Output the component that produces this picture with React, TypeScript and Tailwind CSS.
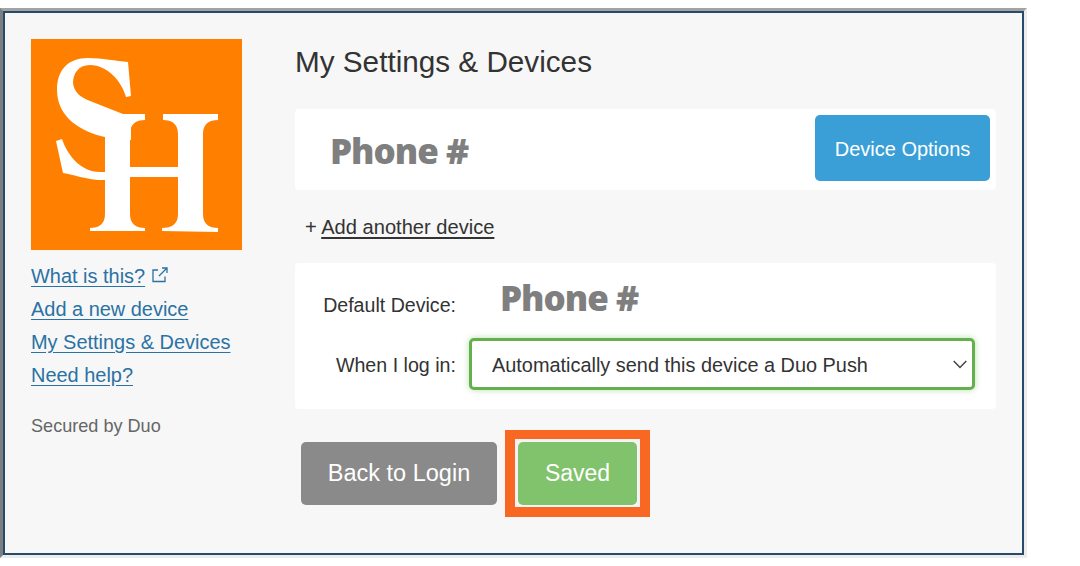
const sans = { fontFamily: '"Liberation Sans", Arial, sans-serif' };

const Logo = () => (
  <svg viewBox="31 39 211 211" className="block w-[211px] h-[211px]">
    <rect x="31" y="39" width="211" height="211" fill="#ff8000" />
    {/* S */}
    <path
      fill="#fff"
      d="M128 62 L131 96 L126 97 C122 82 108 65 90 65 C78 65 73 74 73 83 C74 92 80 97 90 101 L123 114 L131 114 L131 140 L105 137 C82 132 57 118 57 90 C57 70 68 58 88 58 C102 58 116 61 128 62 Z"
    />
    <path
      fill="#fff"
      d="M56 141 L62 139 C67 154 80 172 100 172 L106 172 L106 180 L98 180 C86 179 74 175 63 173 Z"
    />
    {/* H */}
    <path
      fill="#fff"
      d="M90 231 L90 228 C99 228 105 224 105 214 L105 137 L123 114 L145 114 L145 120 C136 120 130 124 130 134 L130 167 L178 167 L178 134 C178 124 172 120 163 120 L163 114 L218 114 L218 120 C209 120 203 124 203 134 L203 214 C203 224 209 228 218 228 L218 232 L162 231 L162 228 C172 228 178 224 178 214 L178 177 L130 177 L130 214 C130 224 136 228 145 228 L145 231 Z"
    />
  </svg>
);

const ExternalIcon = () => (
  <svg width="18" height="18" viewBox="0 0 18 18" fill="none" stroke="#2a72a4" strokeWidth="1.3" className="ml-[6px] mt-[-4px]">
    <path d="M7 4 H2 V15.5 H14 V10.5" />
    <path d="M8 10 L15.5 2.5 M11 2 H16 V7" />
  </svg>
);

const PhoneLabel = ({ className }: { className: string }) => (
  <div
    className={`font-black text-[#7f7f7f] text-[35px] leading-none tracking-[-1px] ${className}`}
    style={{ fontFamily: '"Noto Sans", sans-serif' }}
  >
    Phone #
  </div>
);

const links = ['Add a new device', 'My Settings & Devices', 'Need help?'];

export default function App() {
  return (
    <div className="w-[1080px] h-[566px] bg-white overflow-hidden pt-2" style={sans}>
      <div className="w-[1027px] h-[550px] border-t-[3px] border-l-[3px] border-r-[3px] border-b-[3px] border-t-[#a3a3a3] border-l-[#7c7f82] border-r-[#ececec] border-b-[#ececec]">
        <div className="h-full bg-[#f7f7f7] border-t-2 border-l-2 border-r-2 border-b-2 border-[#274b6a] flex">
          <div className="w-[290px] shrink-0 pl-[26px] pt-[26px]">
            <Logo />
            <div className="mt-[14px] flex flex-col gap-[8px] text-[19.95px] leading-[25px] text-[#2a72a4]">
              <div className="flex items-center">
                <a className="underline underline-offset-[3px]">What is this?</a>
                <ExternalIcon />
              </div>
              {links.map((link) => (
                <a key={link} className="underline underline-offset-[3px]">
                  {link}
                </a>
              ))}
            </div>
            <div className="mt-[27px] text-[18.1px] leading-[22px] text-[#666]">Secured by Duo</div>
          </div>

          <div className="w-[701px] pt-[29px]">
            <h1 className="text-[29.7px] leading-[40px] text-[#333]">My Settings &amp; Devices</h1>

            <div className="mt-[27px] h-[81px] bg-white rounded-[4px] flex items-center justify-between pl-[35px] pr-[6px]">
              <PhoneLabel className="mt-[2px]" />
              <button className="w-[175px] h-[66px] pt-[1px] bg-[#3a9fd6] rounded-[5px] text-white text-[20px] mt-[-3px]">
                Device Options
              </button>
            </div>

            <div className="mt-[24px] pl-[10px] h-[26px] text-[20.1px] leading-[26px] text-[#333]">
              + <a className="underline underline-offset-[3px]">Add another device</a>
            </div>

            <div className="mt-[23px] h-[146px] bg-white rounded-[4px] flex flex-col">
              <div className="flex items-center mt-[15px] h-[40px]">
                <div className="w-[161px] text-right text-[19.6px] leading-[22px] text-[#333] mt-[14px]">Default Device:</div>
                <PhoneLabel className="ml-[44px] mt-[-2px]" />
              </div>
              <div className="flex items-center mt-[20px]">
                <div className="w-[161px] text-right text-[19.65px] leading-[24px] text-[#333] mt-[2px]">When I log in:</div>
                <div className="relative ml-[13px] w-[506px]">
                  <select
                    defaultValue="push"
                    className="appearance-none block w-full h-[52px] bg-white border-[3px] border-[#62b14c] rounded-[5px] pl-[20px] pt-[3px] text-[19.9px] text-[#333] outline-none shadow-[0_0_6px_rgba(98,177,76,0.45)]"
                  >
                    <option value="push">Automatically send this device a Duo Push</option>
                  </select>
                  <svg
                    width="14"
                    height="9"
                    viewBox="0 0 14 9"
                    fill="none"
                    stroke="#444"
                    strokeWidth="1.5"
                    className="absolute right-[8px] top-[22px]"
                  >
                    <path d="M0.7 1 L7 7.5 L13.3 1" />
                  </svg>
                </div>
              </div>
            </div>

            <div className="mt-[21px] pl-[6px] flex items-start">
              <button className="mt-[12px] w-[196px] h-[63px] bg-[#8a8a8a] rounded-[5px] text-white text-[23.5px]">
                Back to Login
              </button>
              <div className="ml-[8px] border-[10px] border-t-[9px] border-[#f96823]">
                <div className="border-[3px] border-b-2 border-[#f4f4f4]">
                  <button className="block w-[119px] h-[63px] bg-[#81c26c] rounded-[5px] text-white text-[23px]">
                    Saved
                  </button>
                </div>
              </div>
            </div>
          </div>
        </div>
      </div>
    </div>
  );
}
